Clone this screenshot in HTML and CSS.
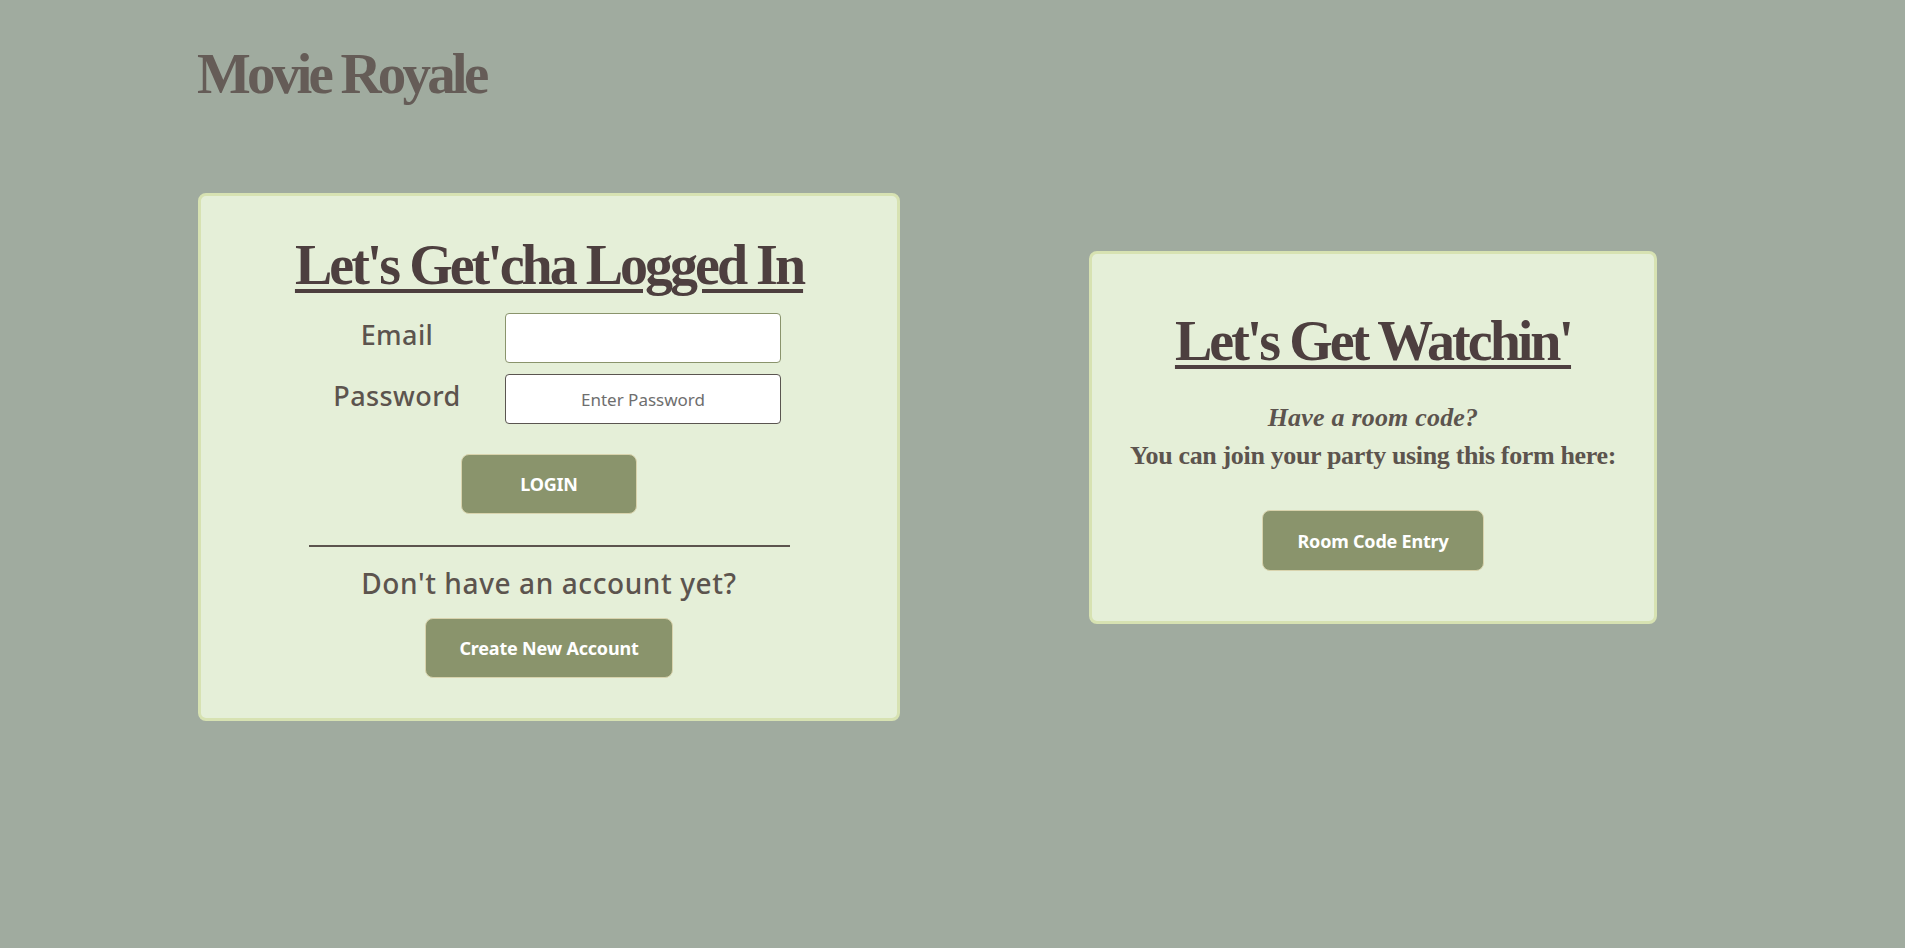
FILE: index.html
```html
<!DOCTYPE html>
<html lang="en">
<head>
<meta charset="utf-8">
<title>Movie Royale</title>
<link rel="stylesheet" href="styles.css">
</head>
<body>
<header class="site-header">
  <h1 class="brand">Movie Royale</h1>
</header>
<main class="panels">
  <section class="card card-login">
    <h2 class="card-title">Let's Get'cha Logged In</h2>
    <form class="login-form">
      <div class="field-grid">
        <label class="field-label" for="email">Email</label>
        <input class="field-input" id="email" type="email">
        <label class="field-label" for="password">Password</label>
        <input class="field-input field-input-active" id="password" type="password" placeholder="Enter Password">
      </div>
      <button class="btn btn-login" type="button">LOGIN</button>
    </form>
    <hr class="divider">
    <p class="signup-prompt">Don't have an account yet?</p>
    <button class="btn btn-wide" type="button">Create New Account</button>
  </section>
  <section class="card card-room">
    <h2 class="card-title">Let's Get Watchin'</h2>
    <p class="room-question">Have a room code?</p>
    <p class="room-info">You can join your party using this form here:</p>
    <button class="btn btn-wide btn-room" type="button">Room Code Entry</button>
  </section>
</main>
</body>
</html>
```

FILE: styles.css
```css
html, body {
  margin: 0;
  padding: 0;
}

body {
  background: #a0ab9f;
  min-height: 948px;
  font-family: "Noto Sans", "Open Sans", sans-serif;
}

.site-header {
  padding: 41px 0 0 197px;
}

.brand {
  margin: 0;
  font-family: "Liberation Serif", serif;
  font-weight: 700;
  font-size: 57px;
  line-height: 66px;
  letter-spacing: -3.8px;
  color: #655c57;
}

.panels {
  display: flex;
  align-items: flex-start;
  gap: 189px;
  padding: 86px 0 0 198px;
}

.card {
  box-sizing: border-box;
  background: #e5efd8;
  border: 3px solid #d7e2b2;
  border-radius: 8px;
  display: flex;
  flex-direction: column;
  align-items: center;
}

.card-login {
  width: 702px;
  padding: 37px 0 40px;
}

.card-room {
  width: 568px;
  margin-top: 58px;
  padding: 55px 0 50px;
}

.card-title {
  margin: 0;
  font-family: "Liberation Serif", serif;
  font-weight: 700;
  font-size: 56px;
  line-height: 64px;
  letter-spacing: -3px;
  color: #4d3f3f;
  text-decoration: underline;
  text-decoration-thickness: 4px;
  text-underline-offset: 5px;
}

.card-room .card-title {
  letter-spacing: -3px;
}

.login-form {
  display: flex;
  flex-direction: column;
  align-items: center;
  margin-top: 16px;
}

.field-grid {
  display: grid;
  grid-template-columns: 180px 276px;
  column-gap: 18px;
  row-gap: 11px;
  align-items: center;
  padding-right: 10px;
}

.field-label {
  text-align: center;
  font-size: 27px;
  font-weight: 500;
  line-height: 36px;
  letter-spacing: 0.4px;
  color: #5c544e;
  margin-top: -6px;
}

.field-input {
  box-sizing: border-box;
  height: 50px;
  width: 276px;
  border: 1px solid #8a946c;
  border-radius: 4px;
  background: #ffffff;
  font-family: "Noto Sans", sans-serif;
  font-size: 17px;
  text-align: center;
  color: #333;
  padding: 0 8px;
}

.field-input-active {
  border-color: #5a5550;
}

.field-input::placeholder {
  color: #6e6e6e;
}

.btn {
  box-sizing: border-box;
  height: 60px;
  border: 1px solid #d8d3ad;
  border-radius: 8px;
  background: #8a946c;
  color: #ffffff;
  font-family: "Noto Sans", sans-serif;
  font-weight: 700;
  font-size: 18px;
  letter-spacing: -0.2px;
  cursor: pointer;
}

.btn-login {
  width: 176px;
  margin-top: 30px;
}

.btn-wide {
  padding: 0 33px;
  margin-top: 16px;
}

.divider {
  width: 481px;
  margin: 31px 0 0;
  border: 0;
  border-top: 2px solid #5c544e;
  height: 0;
}

.signup-prompt {
  margin: 17px 0 0;
  font-size: 28px;
  font-weight: 500;
  line-height: 38px;
  letter-spacing: 0.6px;
  color: #5c544e;
}

.room-question {
  margin: 29px 0 0;
  font-family: "Liberation Serif", serif;
  font-style: italic;
  font-weight: 700;
  font-size: 26px;
  line-height: 32px;
  letter-spacing: 0.2px;
  color: #5c544e;
}

.room-info {
  margin: 6px 0 0;
  font-family: "Liberation Serif", serif;
  font-weight: 700;
  font-size: 26px;
  line-height: 32px;
  letter-spacing: -0.35px;
  color: #5c544e;
}

.btn-room {
  margin-top: 38px;
  height: 61px;
  padding: 0 34px;
}
```
